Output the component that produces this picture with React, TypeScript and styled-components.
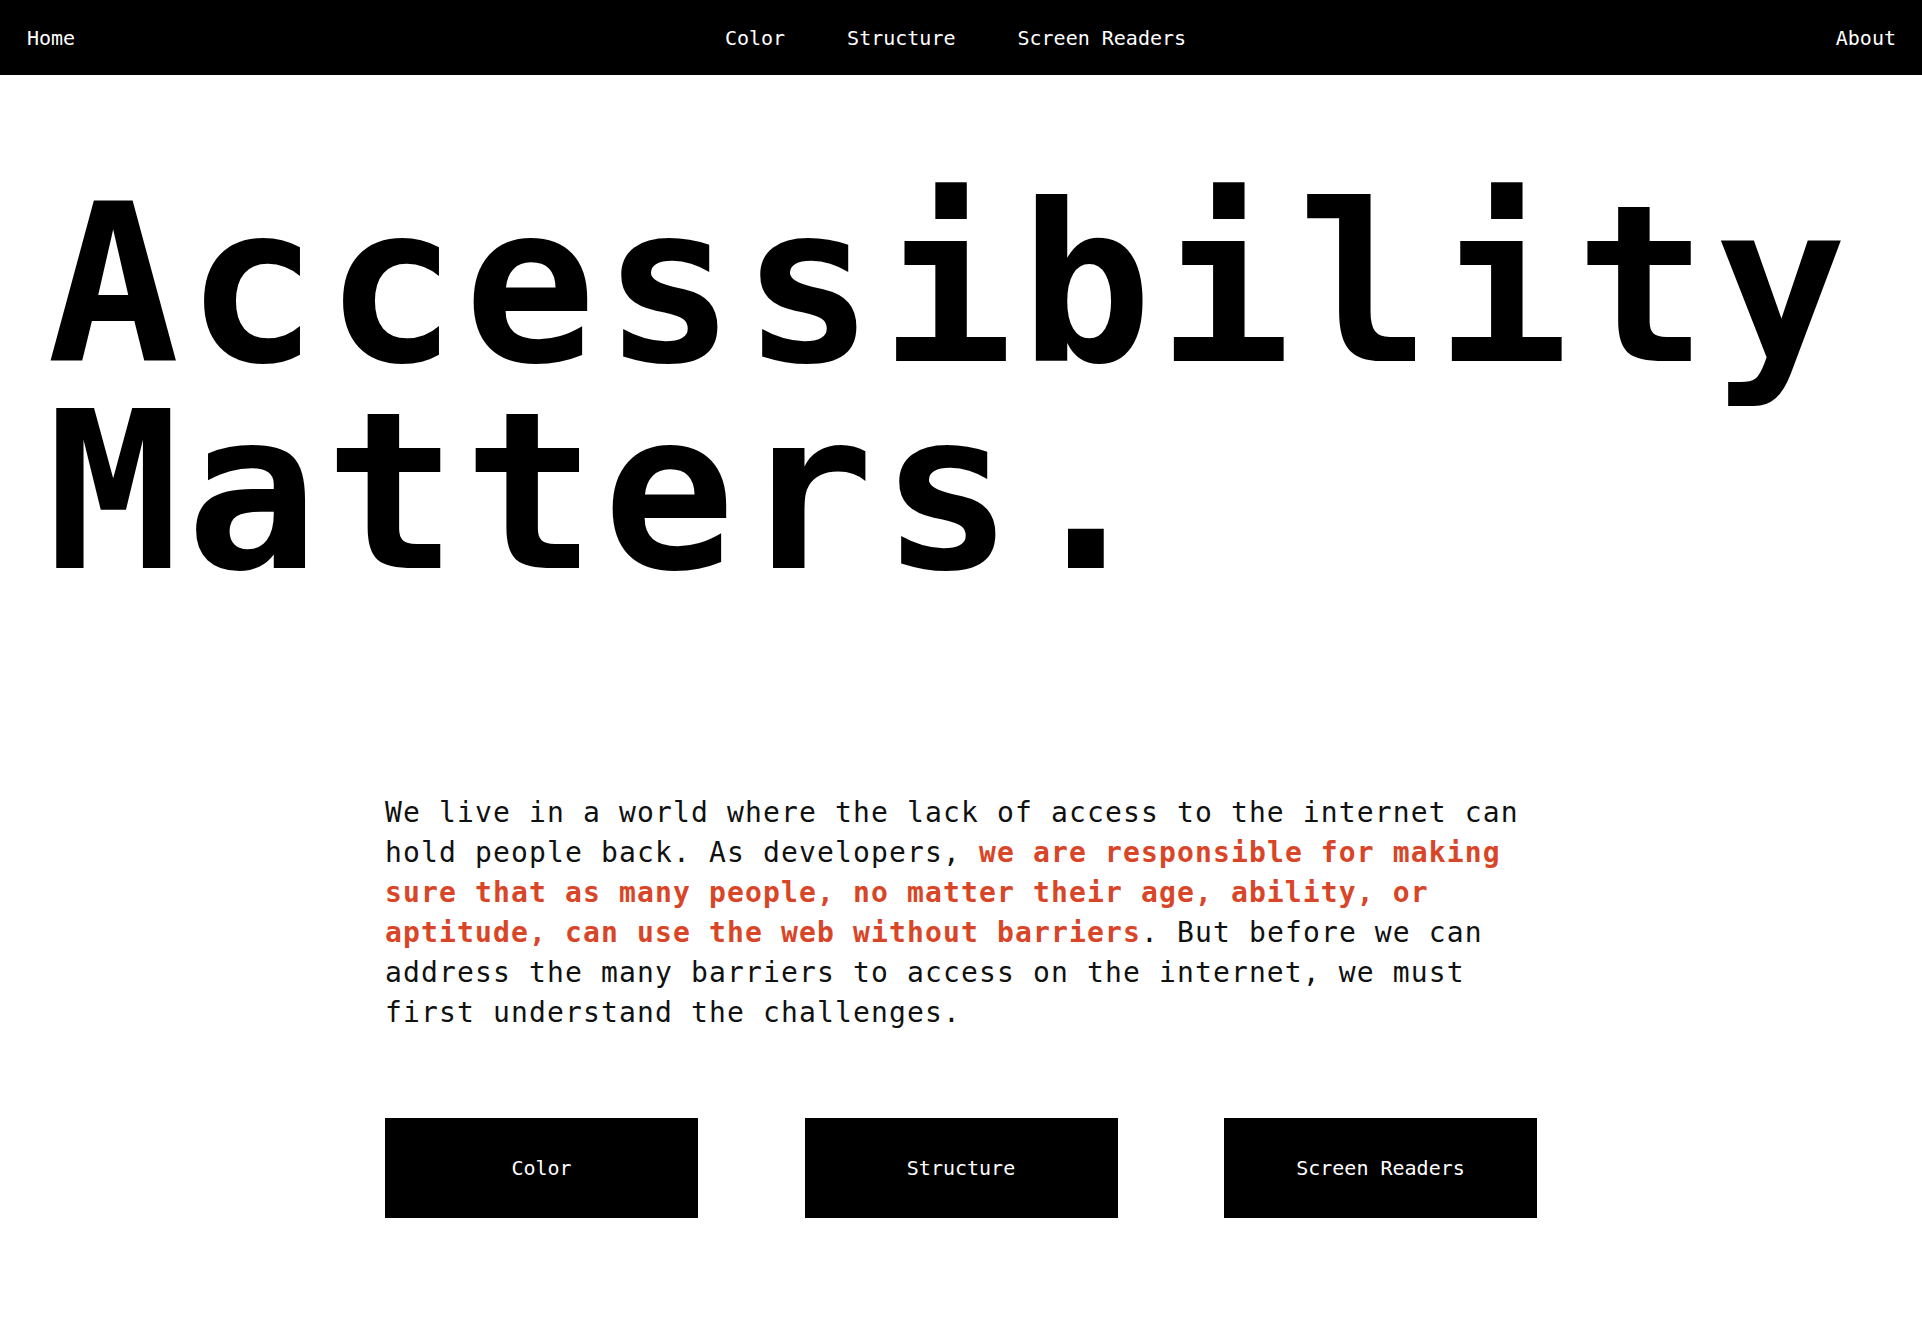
import React from "react";
import styled, { createGlobalStyle } from "styled-components";

const GlobalStyle = createGlobalStyle`
  html, body {
    margin: 0;
    padding: 0;
    background: #ffffff;
  }
  body {
    font-family: "DejaVu Sans Mono", "Liberation Mono", monospace;
    color: #000;
  }
  * { box-sizing: border-box; }
`;

const NavBar = styled.nav`
  display: flex;
  align-items: center;
  justify-content: space-between;
  height: 75px;
  padding: 0 26px 0 27px;
  background: #000;
`;

const NavGroup = styled.div`
  display: flex;
  align-items: center;
  gap: 62px;
`;

const NavLink = styled.a`
  color: #fff;
  text-decoration: none;
  font-family: "DejaVu Sans Mono", monospace;
  font-size: 20px;
  line-height: 24px;
  cursor: pointer;
`;

const Main = styled.main`
  display: flex;
  flex-direction: column;
`;

const Title = styled.h1`
  margin: 107px 0 0 0;
  padding-left: 47px;
  font-family: "DejaVu Sans Mono", monospace;
  font-weight: 700;
  font-size: 220px;
  line-height: 207px;
  letter-spacing: 6.5px;
  color: #000;
`;

const Content = styled.section`
  width: 1152px;
  margin: 197px auto 0;
  display: flex;
  flex-direction: column;
  gap: 85px;
  padding-bottom: 120px;
`;

const Lead = styled.p`
  margin: 0;
  font-family: "DejaVu Sans Mono", monospace;
  font-size: 28px;
  line-height: 40px;
  letter-spacing: 1.14px;
  color: #111;
`;

const Emphasis = styled.strong`
  color: #d94527;
  font-weight: 700;
`;

const ButtonRow = styled.div`
  display: grid;
  grid-template-columns: repeat(3, 313px);
  justify-content: space-between;
`;

const TopicButton = styled.a`
  display: flex;
  align-items: center;
  justify-content: center;
  height: 100px;
  background: #000;
  color: #fff;
  text-decoration: none;
  font-family: "DejaVu Sans Mono", monospace;
  font-size: 20px;
  cursor: pointer;
`;

const topics = ["Color", "Structure", "Screen Readers"];

export default function App() {
  return (
    <>
      <GlobalStyle />
      <NavBar>
        <NavLink>Home</NavLink>
        <NavGroup>
          {topics.map((t) => (
            <NavLink key={t}>{t}</NavLink>
          ))}
        </NavGroup>
        <NavLink>About</NavLink>
      </NavBar>
      <Main>
        <Title>
          Accessibility
          <br />
          Matters.
        </Title>
        <Content>
          <Lead>
            We live in a world where the lack of access to the internet can
            hold people back. As developers,{" "}
            <Emphasis>
              we are responsible for making sure that as many people, no
              matter their age, ability, or aptitude, can use the web without
              barriers
            </Emphasis>
            . But before we can address the many barriers to access on the
            internet, we must first understand the challenges.
          </Lead>
          <ButtonRow>
            {topics.map((t) => (
              <TopicButton key={t}>{t}</TopicButton>
            ))}
          </ButtonRow>
        </Content>
      </Main>
    </>
  );
}
